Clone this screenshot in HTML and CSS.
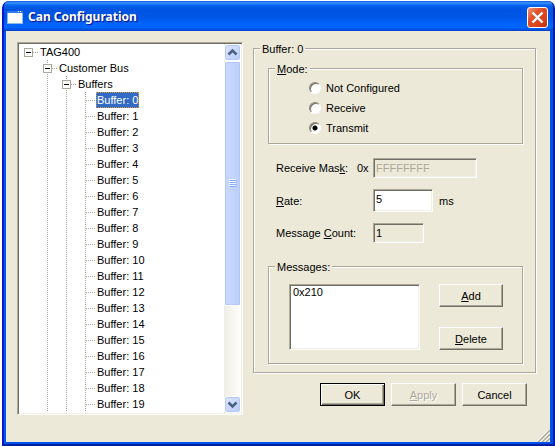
FILE: index.html
```html
<!DOCTYPE html>
<html lang="en">
	<head>
		<meta charset="UTF-8">
		<title>Can Configuration</title>
		<link rel="stylesheet" href="styles.css">
		<script src="tree.js" defer></script>
	</head>
	<body>
		<div class="dialog">
			<div class="titlebar">
				<svg class="app-icon" width="16" height="13" viewBox="0 0 16 13">
					<rect width="16" height="13" fill="#8cb8f4"/>
					<rect width="16" height="2" fill="#2f7be8"/>
					<rect x="11" y="0" width="1" height="1" fill="#fff"/>
					<rect x="13" y="0" width="1" height="1" fill="#fff"/>
					<rect x="1" y="2" width="14" height="10" fill="#fff"/>
				</svg>
				<h1>Can Configuration</h1>
				<button class="close" aria-label="Close">
					<svg width="21" height="21" viewBox="0 0 21 21">
						<path d="M5.5 5.5L15.5 15.5M15.5 5.5L5.5 15.5" stroke="#fff" stroke-width="2.4"/>
					</svg>
				</button>
			</div>

			<form class="client">
				<div class="tree-panel">
					<ul class="tree">
						<li>
							<div class="node"><button type="button" class="toggle" aria-label="Collapse TAG400"></button><span class="name">TAG400</span></div>
							<ul>
								<li>
									<div class="node"><button type="button" class="toggle" aria-label="Collapse Customer Bus"></button><span class="name">Customer Bus</span></div>
									<ul>
										<li>
											<div class="node"><button type="button" class="toggle" aria-label="Collapse Buffers"></button><span class="name">Buffers</span></div>
											<ul id="buffers"></ul>
										</li>
									</ul>
								</li>
							</ul>
						</li>
					</ul>
					<div class="scrollbar">
						<button type="button" class="arrow" aria-label="Scroll up">
							<svg width="15" height="15" viewBox="0 0 15 15"><path d="M3.5 9.5L7.5 5.5L11.5 9.5" fill="none" stroke="#4d6185" stroke-width="2.6"/></svg>
						</button>
						<div class="track">
							<div class="thumb">
								<svg width="8" height="8" viewBox="0 0 8 8">
									<path d="M0 .5H7M0 2.5H7M0 4.5H7M0 6.5H7" stroke="#eef4fe"/>
									<path d="M1 1.5H8M1 3.5H8M1 5.5H8M1 7.5H8" stroke="#8cb0f8"/>
								</svg>
							</div>
						</div>
						<button type="button" class="arrow" aria-label="Scroll down">
							<svg width="15" height="15" viewBox="0 0 15 15"><path d="M3.5 5.5L7.5 9.5L11.5 5.5" fill="none" stroke="#4d6185" stroke-width="2.6"/></svg>
						</button>
					</div>
				</div>

				<div class="details">
					<fieldset class="buffer">
						<legend>Buffer: 0</legend>

						<fieldset class="mode">
							<legend><u>M</u>ode:</legend>
							<label><input type="radio" name="mode">Not Configured</label>
							<label><input type="radio" name="mode">Receive</label>
							<label><input type="radio" name="mode" checked>Transmit</label>
						</fieldset>

						<div class="fields">
							<div class="field">
								<label for="mask">Receive Mas<u>k</u>:</label>
								<span class="prefix">0x</span>
								<input class="mask" id="mask" type="text" value="FFFFFFFF" disabled>
							</div>
							<div class="field">
								<label for="rate"><u>R</u>ate:</label>
								<span class="prefix"></span>
								<input class="rate" id="rate" type="text" value="5">
								<span class="unit">ms</span>
							</div>
							<div class="field">
								<label for="count">Message <u>C</u>ount:</label>
								<span class="prefix"></span>
								<input class="count" id="count" type="text" value="1" readonly>
							</div>
						</div>

						<fieldset class="messages">
							<legend>Messages:</legend>
							<select size="4" aria-label="Messages">
								<option>0x210</option>
							</select>
							<div class="message-actions">
								<button type="button" class="btn"><u>A</u>dd</button>
								<button type="button" class="btn"><u>D</u>elete</button>
							</div>
						</fieldset>
					</fieldset>

					<div class="actions">
						<button type="button" class="btn default">OK</button>
						<button type="button" class="btn" disabled><u>A</u>pply</button>
						<button type="button" class="btn">Cancel</button>
					</div>
				</div>

				<svg class="grip" width="12" height="12" viewBox="0 0 12 12">
					<path d="M0 12L12 0M4 12L12 4M8 12L12 8" stroke="#aca899" stroke-width="1.6"/>
					<path d="M-1.5 12L12 -1.5M2.5 12L12 2.5M6.5 12L12 6.5" stroke="#fff"/>
				</svg>
			</form>
		</div>
	</body>
</html>
```
FILE: tree.js
```js
var oBuffers = document.getElementById("buffers");

//20 buffers, the first one is selected
for (var i=0; i<20; i++) {
	var oLi = document.createElement("li");
	var oName = document.createElement("span");
	oLi.className = "node leaf";
	oName.className = i == 0 ? "name selected" : "name";
	oName.textContent = "Buffer: " + i;
	oLi.appendChild(oName);
	oBuffers.appendChild(oLi);
}
```
FILE: styles.css
```css
* {
	box-sizing: border-box;
	margin: 0;
	padding: 0;
}

body {
	min-height: 100vh;
	padding: 1px 0 0 2px;
	display: flex;
	background: #fff;
	font: 11px/16px "Liberation Sans", Arial, sans-serif;
	color: #000;
}

ul {
	list-style: none;
}

input, select, button {
	font: inherit;
	color: inherit;
	border-radius: 0;
	outline: none;
}

/* window */

.dialog {
	flex: 1;
	display: flex;
	flex-direction: column;
	background: #ece9d8;
	border: solid;
	border-width: 0 2px 2px 2px;
	border-color: #001ea0 #001ea0 #001ea0 #0019cf;
	box-shadow: inset 2px 0 #0058ee, inset 0 -2px #0050ee, inset -3px 0 #0050ee;
	border-radius: 7px 7px 0 0;
	overflow: hidden;
}

.titlebar {
	display: flex;
	align-items: center;
	height: 30px;
	padding: 2px 5px 0 3px;
	background: linear-gradient(#0a5be0 0, #3c93ff 2px, #0a66ee 4px, #0054e3 8px, #0055e5 16px, #0066ff 24px, #0063f8 27px, #0040c8 30px);
}

.titlebar h1 {
	flex: 1;
	padding-left: 5px;
	font: bold 12px/20px "Noto Sans", "Open Sans", sans-serif;
	color: #fff;
	text-shadow: 1px 1px 1px #0f1089;
}

.close {
	width: 21px;
	height: 21px;
	border: 1px solid #fff;
	border-radius: 3px;
	background: linear-gradient(135deg, #ee9a80, #e0512b 35%, #d8401a 75%, #b83010);
}

.close svg {
	display: block;
	margin: -1px;
}

.client {
	position: relative;
	flex: 1;
	display: grid;
	grid-template-columns: 226px 1fr;
	gap: 10px;
	align-items: start;
	padding: 11px 17px 20px 13px;
}

/* tree */

.tree-panel {
	display: flex;
	background: #fff;
	border: 1px solid;
	border-color: #aca899 #fff #fff #aca899;
	box-shadow: inset 1px 1px #716f64, inset -1px -1px #f1efe2;
	padding: 1px;
}

.tree {
	flex: 1;
	padding: 0 0 1px 5px;
}

.tree ul {
	margin-left: 19px;
	background: repeating-linear-gradient(#aca899 0 1px, transparent 1px 2px) 4px 0 / 1px 100% no-repeat;
}

.node {
	display: flex;
	align-items: center;
	height: 16px;
	background: repeating-linear-gradient(90deg, #aca899 0 1px, transparent 1px 2px) 5px 8px / 9px 1px no-repeat;
}

.toggle {
	width: 9px;
	height: 9px;
	margin-right: 6px;
	border: 1px solid #aca899;
	background: linear-gradient(#000, #000) 1px 3px / 5px 1px no-repeat #fff;
}

.leaf {
	padding-left: 15px;
}

.name {
	padding: 0 1px;
}

.selected {
	background: #316ac5;
	color: #fff;
	outline: 1px dotted #d99a3a;
	outline-offset: -1px;
}

.scrollbar {
	display: flex;
	flex-direction: column;
	width: 17px;
	background: linear-gradient(90deg, #eeede5, #fefefb);
}

.arrow {
	height: 17px;
	border: 1px solid #fff;
	border-radius: 3px;
	background: linear-gradient(135deg, #dde6fe, #b9cbfa);
	box-shadow: inset 0 0 0 1px #b4c8f6;
}

.arrow svg {
	display: block;
}

.track {
	flex: 1;
}

.thumb {
	display: flex;
	align-items: center;
	justify-content: center;
	height: 73%;
	border: 1px solid #fff;
	border-radius: 2px;
	background: linear-gradient(90deg, #c9d8fc, #bdd0fd);
	box-shadow: inset 0 0 0 1px #b4c8f6, inset -1px -1px #98b4e8;
}

/* groups */

fieldset {
	min-width: 0;
	border: 1px solid #aca899;
	box-shadow: 1px 1px #fff, inset 1px 1px #fff;
}

legend {
	height: 12px;
	padding: 0 2px;
	line-height: 14px;
	background: #ece9d8;
}

.buffer {
	padding: 8px 12px 8px 14px;
}

.buffer > legend {
	margin-left: -8px;
}

.mode {
	padding: 4px 8px 5px 40px;
}

.mode legend {
	margin-left: -34px;
}

.mode label {
	display: flex;
	align-items: center;
	height: 20px;
}

.mode input {
	appearance: none;
	width: 12px;
	height: 12px;
	margin-right: 5px;
	border: 1px solid;
	border-color: #8a8778 #fff #fff #8a8778;
	border-radius: 50%;
	background: #fff;
	box-shadow: inset 1px 1px #716f64;
}

.mode input:checked {
	background: radial-gradient(circle, #000 2px, #fff 3px);
}

.fields {
	display: grid;
	gap: 11px;
	padding: 14px 8px 17px;
}

.field {
	display: flex;
	align-items: center;
	white-space: nowrap;
}

.field label {
	width: 81px;
}

.prefix {
	width: 16px;
}

.field input, select {
	border: 1px solid;
	border-color: #aca899 #fff #fff #aca899;
	box-shadow: inset 1px 1px #716f64, inset -1px -1px #f1efe2;
	background: #fff;
}

.field input {
	height: 20px;
	padding: 0 2px;
}

.field .mask {
	width: 104px;
	background: #ece9d8;
	color: #aca899;
}

.field .rate {
	width: 60px;
	height: 23px;
	padding-bottom: 3px;
}

.field .count {
	width: 51px;
	background: #ece9d8;
}

.unit {
	margin-left: 6px;
}

.messages {
	display: flex;
	gap: 19px;
	padding: 12px 19px 13px 20px;
}

.messages legend {
	margin-left: -14px;
}

select {
	flex: 1;
	min-width: 0;
	height: 66px;
	padding: 1px;
	overflow: hidden;
}

option {
	padding: 0 2px;
}

.message-actions {
	display: flex;
	flex-direction: column;
	justify-content: space-between;
	width: 64px;
}

/* buttons */

.btn {
	height: 23px;
	border: 1px solid;
	border-color: #fff #716f64 #716f64 #fff;
	box-shadow: inset -1px -1px #aca899;
	background: #ece9d8;
}

.btn:disabled {
	color: #aca899;
	text-shadow: 1px 1px #fff;
}

.default {
	border-color: #000;
	box-shadow: inset 1px 1px #fff, inset -1px -1px #716f64, inset -2px -2px #aca899;
}

.actions {
	display: flex;
	justify-content: flex-end;
	gap: 6px;
	padding: 10px 9px 0 0;
}

.actions .btn {
	width: 65px;
}

.grip {
	position: absolute;
	right: 3px;
	bottom: 2px;
}
```
